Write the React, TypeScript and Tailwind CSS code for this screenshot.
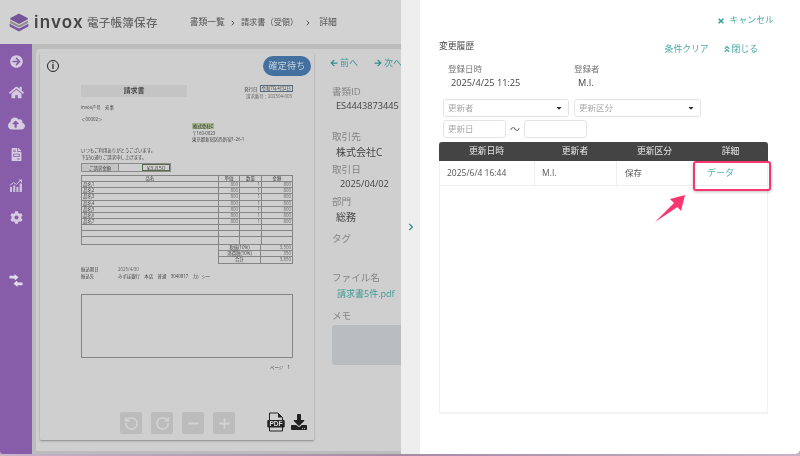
import { ChevronRight, Minus, Plus, RotateCcw, RotateCw } from "lucide-react";
import {
  FaAngleDoubleUp,
  FaArrowCircleRight,
  FaArrowLeft,
  FaArrowRight,
  FaCaretDown,
  FaChevronRight,
  FaCloudUploadAlt,
  FaCog,
  FaDownload,
  FaFileInvoice,
  FaHome,
  FaTimes,
} from "react-icons/fa";

const items = ["品名1", "品名2", "品名3", "品名4", "品名5", "品名6", "品名7", "", "", ""];

function Logo() {
  return (
    <svg viewBox="0 0 20 19" className="h-[19px] w-[20px] shrink-0">
      <path d="M10 0.5 L18.5 5 Q19.5 5.8 18.5 6.6 L10 11 L1.5 6.6 Q0.5 5.8 1.5 5 Z" fill="#75569a" />
      <path d="M1 7.5 L10 12.2 L19 7.5 V10 L10 14.6 L1 10 Z" fill="#8f8f8f" />
      <path d="M0.6 10.8 L10 15.6 L19.4 10.8 V13.6 L10 18.6 L0.6 13.6 Z" fill="#7c58a2" />
    </svg>
  );
}

function ChartIcon() {
  return (
    <svg viewBox="0 0 14 14" className="h-[14px] w-[14px]" fill="#cfc2da">
      <rect x="1" y="8" width="2" height="5" />
      <rect x="4.2" y="6.5" width="2" height="6.5" />
      <rect x="7.4" y="8" width="2" height="5" />
      <rect x="10.6" y="4.5" width="2.4" height="8.5" />
      <path d="M0.8 6.5 L4.5 3.6 L7.5 5.4 L11.2 1.6" fill="none" stroke="#cfc2da" strokeWidth="1" />
      <path d="M9.6 0.6 H13 V4 Z" />
    </svg>
  );
}

function SwapIcon() {
  return (
    <svg viewBox="0 0 14 13" className="h-[13px] w-[14px]" fill="#e2dbe8">
      <path d="M0.5 1.8 H5.5 V0 L9.5 3.2 L6.4 6.2 L5 4.6 H0.5 Z" />
      <path d="M13.5 11.2 H8.5 V13 L4.5 9.8 L7.6 6.8 L9 8.4 H13.5 Z" />
    </svg>
  );
}

function Sidebar() {
  return (
    <aside className="flex w-[32px] shrink-0 flex-col items-center bg-[#875ca8] pt-[10px] text-[#d6cbe0]">
      <div className="flex h-[14px] items-center"><FaArrowCircleRight size={13} /></div>
      <div className="mt-[17px] flex h-[14px] items-center"><FaHome size={15} /></div>
      <div className="mt-[17px] flex h-[14px] items-center"><FaCloudUploadAlt size={17} /></div>
      <div className="mt-[17px] flex h-[14px] items-center"><FaFileInvoice size={13} /></div>
      <div className="mt-[18px] flex h-[14px] items-center"><ChartIcon /></div>
      <div className="mt-[17px] flex h-[14px] items-center"><FaCog size={13} /></div>
      <div className="mt-[49px] flex h-[14px] items-center"><SwapIcon /></div>
    </aside>
  );
}

function InvoicePaper() {
  return (
    <div className="ml-[41px] mt-[32px] w-[212px] text-[4.4px] leading-[6px] text-[#444]">
      <div className="flex items-start justify-between">
        <div className="flex h-[12px] w-[106px] items-center justify-center bg-[#c4c4c4] text-[7px] font-medium text-[#333]">
          請求書
        </div>
        <div className="flex flex-col items-end">
          <div className="flex items-center gap-[2px]">
            <span>発行日</span>
            <span className="border border-[#556a7c] px-[1px] leading-[5px]">令和7年4月2日</span>
          </div>
          <div className="mt-[1px] pr-[1px] text-[#666]">請求番号：202504-003</div>
        </div>
      </div>

      <div className="mt-[5px]">invox产号　宛事</div>
      <div className="mt-[6px]">＜00002＞</div>

      <div className="ml-[111px] mt-[1px]">
        <div className="w-fit bg-[#a3b38c] px-[1px] text-[#333]">株式会社C</div>
        <div className="mt-[1px]">〒160-0023</div>
        <div>東京都新宿区西新宿1-26-1</div>
      </div>

      <div className="mt-[5px]">いつもご利用ありがとうございます。</div>
      <div className="mt-[1px]">下記の通りご請求申し上げます。</div>

      <div className="mt-[3px] flex h-[9px] w-[90px] border border-[#8a8a8a]">
        <div className="flex w-[37px] items-center justify-center border-r border-[#8a8a8a] bg-[#c4c4c4]">ご請求金額</div>
        <div className="ml-[23px] flex flex-1 items-center justify-center border border-[#56694a] text-[6px] text-[#555]">¥3,850</div>
      </div>

      <div className="mt-[3px] border border-[#858585] leading-[5px]">
        <div className="flex h-[6.2px] border-b border-[#858585] text-center">
          <div className="w-[137px] border-r border-[#858585]">品名</div>
          <div className="w-[21px] border-r border-[#858585]">単価</div>
          <div className="w-[22px] border-r border-[#858585]">数量</div>
          <div className="flex-1">金額</div>
        </div>
        {items.map((item, i) => (
          <div key={i} className="flex h-[6.15px] border-b border-[#858585] last:border-b-0">
            <div className="w-[137px] border-r border-[#858585] pl-[1px]">{item}</div>
            <div className="w-[21px] border-r border-[#858585] pr-[1px] text-right text-[#666]">{item && "800"}</div>
            <div className="w-[22px] border-r border-[#858585] pr-[1px] text-right text-[#666]">{item && "1"}</div>
            <div className="flex-1 pr-[1px] text-right text-[#666]">{item && "800"}</div>
          </div>
        ))}
      </div>

      <div className="ml-[137px] border border-t-0 border-[#858585] leading-[5px]">
        {[
          ["税抜(10%)", "3,500"],
          ["消費税(10%)", "350"],
          ["合計", "3,850"],
        ].map(([label, value]) => (
          <div key={label} className="flex h-[6px] border-b border-[#858585] last:border-b-0">
            <div className="w-[42px] border-r border-[#858585] text-center">{label}</div>
            <div className="flex-1 pr-[1px] text-right text-[#666]">{value}</div>
          </div>
        ))}
      </div>

      <div className="mt-[2.5px] flex">
        <span className="w-[37px]">振込期日</span>
        <span className="text-[#666]">2025/4/30</span>
      </div>
      <div className="mt-[0.5px] flex">
        <span className="w-[37px]">振込先</span>
        <span>みずほ銀行　本店　普通　3040817　カ）シー</span>
      </div>

      <div className="-ml-[0.5px] mt-[15.5px] h-[64px] border border-[#858585]" />
      <div className="mt-[6px] pr-[3px] text-right">ページ　1</div>
    </div>
  );
}

function ToolButton({ children }: { children: React.ReactNode }) {
  return (
    <div className="flex h-[22px] w-[22px] items-center justify-center rounded-[2px] bg-[#bcbcbc] text-[#d2d2d2]">
      {children}
    </div>
  );
}

function PdfIcon() {
  return (
    <svg viewBox="0 0 18 20" className="h-[20px] w-[18px]">
      <path d="M2.5 1 H11 L15.5 5.5 V19 H2.5 Z" fill="none" stroke="#222" strokeWidth="1" />
      <path d="M11 1 V5.5 H15.5 Z" fill="#222" />
      <rect x="0.3" y="8" width="17.4" height="7.4" rx="1" fill="#222" />
      <text x="9" y="14.2" textAnchor="middle" fontSize="6.6" fontWeight="700" fill="#ddd" fontFamily="Liberation Sans">PDF</text>
    </svg>
  );
}

function DocCard() {
  return (
    <div className="relative ml-[4px] mt-[4px] flex h-[387px] w-[274px] shrink-0 flex-col rounded-[1px] bg-[#cfcfcf] shadow-[0_1px_2px_rgba(0,0,0,0.35)]">
      <div className="absolute left-[7px] top-[7px] flex h-[12px] w-[12px] items-center justify-center rounded-full border-[1.5px] border-[#222] text-[8px] font-bold leading-none text-[#222]">
        i
      </div>
      <div className="absolute left-[223px] top-[3px] flex h-[20px] w-[48px] items-center justify-center rounded-[10px] bg-[#44709f] text-[9px] tracking-[0.2px] text-[#c9d2da]">
        確定待ち
      </div>
      <InvoicePaper />
      <div className="mt-auto flex items-end pb-[6px] pl-[80px]">
        <div className="flex gap-[9px]">
          <ToolButton><RotateCcw size={15} strokeWidth={2.6} /></ToolButton>
          <ToolButton><RotateCw size={15} strokeWidth={2.6} /></ToolButton>
          <ToolButton><Minus size={15} strokeWidth={3} /></ToolButton>
          <ToolButton><Plus size={15} strokeWidth={3} /></ToolButton>
        </div>
        <div className="ml-[32px] flex items-center gap-[6px] pb-[2px] text-[#222]">
          <PdfIcon />
          <FaDownload size={16} />
        </div>
      </div>
    </div>
  );
}

function Field({ label, children, className }: { label: string; children: React.ReactNode; className: string }) {
  return (
    <div className={className}>
      <div className="whitespace-nowrap text-[9.6px] leading-[14px] text-[#858585]">{label}</div>
      {children}
    </div>
  );
}

function InfoColumn() {
  return (
    <div className="ml-[16px] flex min-w-0 flex-1 flex-col overflow-hidden pt-[7px]">
      <div className="flex h-[14px] items-center whitespace-nowrap text-[9px] text-[#3f9a96]">
        <FaArrowLeft size={8} className="shrink-0 text-[#2f8f8b]" />
        <span className="ml-[2px]">前へ</span>
        <FaArrowRight size={8} className="ml-[16px] shrink-0 text-[#2f8f8b]" />
        <span className="ml-[2px]">次へ</span>
      </div>
      <div className="pl-[2px]">
        <Field label="書類ID" className="mt-[15px]">
          <div className="whitespace-nowrap pl-[4px] text-[9.2px] leading-[14px] text-[#444]">ES4443873445</div>
        </Field>
        <Field label="取引先" className="mt-[17px]">
          <div className="pl-[4px] text-[10px] leading-[16px] text-[#444]">株式会社C</div>
        </Field>
        <Field label="取引日" className="mt-[3px]">
          <div className="pl-[8px] text-[9.2px] leading-[14px] text-[#444]">2025/04/02</div>
        </Field>
        <Field label="部門" className="mt-[4px]">
          <div className="pl-[4px] text-[10px] leading-[16px] text-[#444]">総務</div>
        </Field>
        <Field label="タグ" className="mt-[7px]">
          <div className="h-[25px]" />
        </Field>
        <Field label="ファイル名" className="">
          <div className="whitespace-nowrap pl-[5px] text-[9px] leading-[18px] text-[#3f9a96]">請求書5件.pdf</div>
        </Field>
        <Field label="メモ" className="mt-[6px]">
          <div className="mt-[2px] h-[40px] w-[80px] rounded-[3px] bg-[#b9bdc0]" />
        </Field>
      </div>
    </div>
  );
}

function DimmedPage() {
  return (
    <div className="flex w-[401px] shrink-0 flex-col overflow-hidden rounded-bl-[3px] bg-[#d2d2d2] font-['Open_Sans','Noto_Sans_CJK_JP',sans-serif]">
      <header className="flex h-[44px] shrink-0 items-center pl-[9px] pt-[1px] text-[#555]">
        <Logo />
        <span className="ml-[5px] font-['Inter',sans-serif] text-[17px] font-semibold tracking-[1.2px] text-[#444]">invox</span>
        <span className="ml-[3px] text-[11.5px] font-medium tracking-[0.3px] text-[#666]">電子帳簿保存</span>
        <span className="ml-[32px] text-[8.8px]">書類一覧</span>
        <ChevronRight size={8} strokeWidth={3} className="ml-[4px]" />
        <span className="ml-[4px] text-[8.2px]">請求書（受領）</span>
        <ChevronRight size={8} strokeWidth={3} className="ml-[6px]" />
        <span className="ml-[7px] text-[8.8px]">詳細</span>
      </header>
      <div className="flex min-h-0 flex-1">
        <Sidebar />
        <main className="min-w-0 flex-1 bg-[#bcbcbc] pl-[4px] pt-[5px]">
          <div className="flex h-[402px] rounded-tl-[4px] bg-[#cfcfcf]">
            <DocCard />
            <InfoColumn />
          </div>
        </main>
      </div>
    </div>
  );
}

function FilterBox({ label, className, caret }: { label: string; className: string; caret?: boolean }) {
  return (
    <div className={`flex h-[18px] items-center justify-between rounded-[3px] border border-[#e4e4e4] pl-[4px] pr-[5px] text-[8.5px] text-[#a8a8a8] ${className}`}>
      <span>{label}</span>
      {caret && <FaCaretDown size={8} className="text-[#333]" />}
    </div>
  );
}

function HistoryTable() {
  return (
    <div className="relative mt-[4px] flex h-[271px] flex-col border border-t-0 border-[#f0f0f0] shadow-[0_1px_1px_rgba(0,0,0,0.04)]">
      <div className="-mx-px flex h-[19px] shrink-0 items-center rounded-t-[3px] bg-[#444444] text-center text-[8.8px] text-[#e8e8e8]">
        <div className="w-[95px]">更新日時</div>
        <div className="w-[82px]">更新者</div>
        <div className="w-[77px]">更新区分</div>
        <div className="flex-1">詳細</div>
      </div>
      <div className="flex h-[25px] shrink-0 items-center border-b border-[#eeeeee] text-[8.5px] text-[#555]">
        <div className="flex h-full w-[95px] items-center border-r border-[#eeeeee] pl-[7px]">2025/6/4 16:44</div>
        <div className="flex h-full w-[82px] items-center border-r border-[#eeeeee] pl-[7px]">M.I.</div>
        <div className="flex h-full w-[77px] items-center pl-[8px]">保存</div>
        <div className="flex h-full flex-1 items-center pl-[13px] text-[9px] text-[#4cb3ae]">データ</div>
      </div>
      <div className="absolute left-[253px] top-[19px] h-[30px] w-[78px] rounded-[3px] border-[2px] border-[#f7356f] shadow-[0_1px_3px_rgba(0,0,0,0.25)]" />
      <svg viewBox="0 0 32 30" className="absolute left-[214px] top-[51px] h-[30px] w-[32px]">
        <path d="M1 29 L20 10 L16 6 L31 2 L27 18 L23.5 14 Z" fill="#f7356f" />
      </svg>
    </div>
  );
}

function HistoryPanel() {
  return (
    <div className="flex min-w-0 flex-1 overflow-hidden rounded-br-[5px] bg-white font-['Open_Sans','Noto_Sans_CJK_JP',sans-serif]">
      <div className="flex w-[19px] shrink-0 items-center justify-center bg-[#eeeeee] text-[#1f8a88]">
        <FaChevronRight size={8} />
      </div>
      <div className="flex min-w-0 flex-1 flex-col pl-[19px] pr-[32px]">
        <div className="-mr-[6px] mt-[14px] flex h-[14px] items-center justify-end text-[8.8px] text-[#4aa9a5]">
          <FaTimes size={8} className="text-[#2f9e99]" />
          <span className="ml-[5px] tracking-[0.1px]">キャンセル</span>
        </div>
        <div className="mt-[11px] flex items-start">
          <span className="text-[8.8px] leading-[14px] text-[#444]">変更履歴</span>
          <span className="ml-auto mt-[3px] text-[8.8px] leading-[14px] text-[#4aa9a5]">条件クリア</span>
          <span className="ml-[14px] mr-[10px] mt-[3px] flex items-center text-[8.8px] leading-[14px] text-[#4aa9a5]">
            <FaAngleDoubleUp size={8} className="mr-[1px]" />
            閉じる
          </span>
        </div>
        <div className="ml-[9px] mt-[6px] flex">
          <div className="w-[126px]">
            <div className="text-[8.5px] leading-[14px] text-[#777]">登録日時</div>
            <div className="pl-[3px] text-[9.2px] leading-[13px] text-[#444]">2025/4/25 11:25</div>
          </div>
          <div>
            <div className="text-[8.5px] leading-[14px] text-[#777]">登録者</div>
            <div className="pl-[4px] text-[9.2px] leading-[13px] text-[#444]">M.I.</div>
          </div>
        </div>
        <div className="ml-[4px] mt-[10px] flex gap-[5px]">
          <FilterBox label="更新者" className="w-[126px]" caret />
          <FilterBox label="更新区分" className="w-[127px]" caret />
        </div>
        <div className="ml-[4px] mt-[3px] flex items-center">
          <FilterBox label="更新日" className="w-[63px]" />
          <span className="w-[18px] text-center text-[10px] text-[#666]">～</span>
          <FilterBox label="" className="w-[63px]" />
        </div>
        <HistoryTable />
      </div>
    </div>
  );
}

export default function App() {
  return (
    <div className="flex h-[456px] w-[800px] flex-col overflow-hidden bg-[#c9a8c6] blur-[0.4px]">
      <div className="flex min-h-0 flex-1">
        <DimmedPage />
        <HistoryPanel />
      </div>
      <div className="h-[2px] shrink-0 bg-gradient-to-r from-[#c9b3c9] via-[#a58aa5] to-[#c9b3c9]" />
    </div>
  );
}
